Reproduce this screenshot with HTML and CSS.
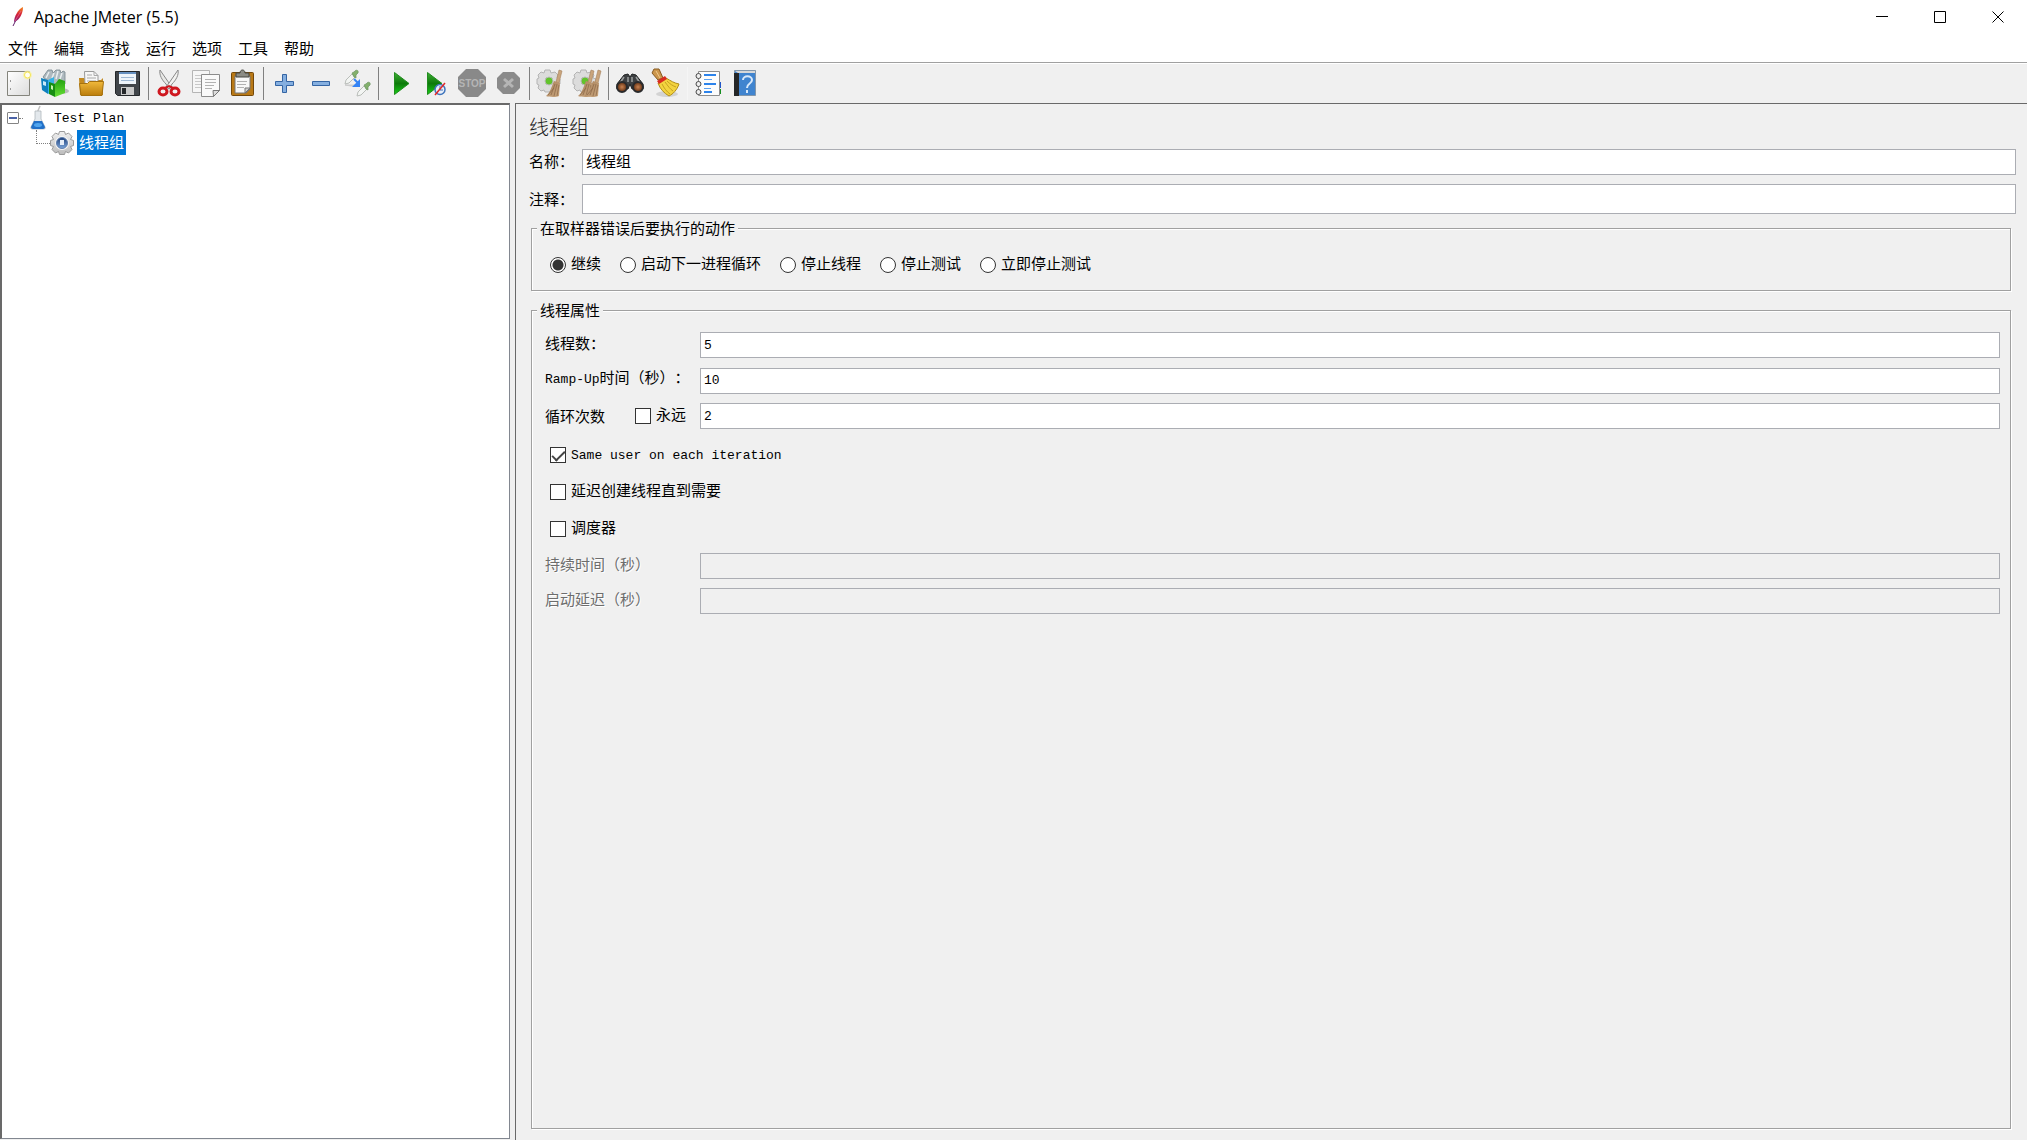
FILE: index.html
```html
<!DOCTYPE html>
<html lang="zh-CN">
<head>
<meta charset="utf-8">
<title>Apache JMeter (5.5)</title>
<link rel="stylesheet" href="styles.css">
</head>
<body>
<svg class="defs" aria-hidden="true">
  <defs>
    <linearGradient id="paper" x1="0" y1="0" x2="1" y2="1"><stop offset="0" stop-color="#fff"/><stop offset="1" stop-color="#dcdcdc"/></linearGradient>
    <linearGradient id="gold" x1="0" y1="0" x2="0" y2="1"><stop offset="0" stop-color="#f0b93c"/><stop offset="1" stop-color="#bb7d0c"/></linearGradient>
    <linearGradient id="play" x1="0" y1="0" x2="0" y2="1"><stop offset="0" stop-color="#3fae35"/><stop offset=".5" stop-color="#0d7a0a"/><stop offset="1" stop-color="#17cf17"/></linearGradient>
    <linearGradient id="green" x1="0" y1="0" x2="0" y2="1"><stop offset="0" stop-color="#22a010"/><stop offset="1" stop-color="#67df35"/></linearGradient>
    <linearGradient id="straw" x1="0" y1="0" x2="1" y2="1"><stop offset="0" stop-color="#a9825c"/><stop offset="1" stop-color="#c9a67e"/></linearGradient>
    <linearGradient id="feather" x1="0" y1="1" x2="0" y2="0"><stop offset="0" stop-color="#7b1f7a"/><stop offset=".5" stop-color="#d4213a"/><stop offset="1" stop-color="#f58a1f"/></linearGradient>
    <linearGradient id="steel" x1="0" y1="0" x2="0" y2="1"><stop offset="0" stop-color="#f0f0f0"/><stop offset="1" stop-color="#bcbcbc"/></linearGradient>
    <linearGradient id="hub" x1="0" y1="0" x2="0" y2="1"><stop offset="0" stop-color="#1d3f78"/><stop offset="1" stop-color="#7ba6dc"/></linearGradient>
    <radialGradient id="lens"><stop offset="0" stop-color="#c98250"/><stop offset="1" stop-color="#5f2f12"/></radialGradient>
    <g id="sweep">
      <path d="M22 0l3 1-3 12-3-1z" fill="#c9a47c" stroke="#a5805a" stroke-width=".6"/>
      <path d="M17 11l6 2-1 13c-3 1.500-10 1-13 0 4-3 5-8 8-15z" fill="url(#straw)"/>
      <path d="M18 14l-4 11M20 14l-3 12M22 15l-2 11M17 18l-6 7" stroke="#8a6646" stroke-width=".7" fill="none"/>
    </g>
    <g id="cog">
      <path d="M8 2h5l1 3 4-1 3 3-1 3 3 1v5l-3 1 1 3-3 3-4-1-1 2H8l-1-2-3 1-3-3 1-3-2-1v-5l2-1-1-3 3-3 3 1z" fill="#dcdcdc" stroke="#b4b4b4"/>
      <circle cx="12" cy="13" r="4" fill="#62c42c" stroke="#b8b8b8"/>
    </g>
    <g id="dropper">
      <path d="M1 14l1-4 6-6 3 3-6 6z" fill="#f3f5f3" stroke="#b9bdb9"/>
      <path d="M8 3l2-1c2-3 5-2 4 1l-2 2 0 3-2-1z" fill="#83b06c" stroke="#6a9560" stroke-width=".7"/>
    </g>
  </defs>
</svg>

<header class="titlebar">
  <svg class="feather" viewBox="0 0 12 20" aria-hidden="true"><path d="M1 19L5 11" stroke="#60206b"/><path d="M2 15C2 10 6 2 11 0c0 6-3 13-9 15z" fill="url(#feather)"/><path d="M3 14L9 4" stroke="#ee6b8a" stroke-width=".7"/></svg>
  <h1 class="app-title">Apache JMeter (5.5)</h1>
  <div class="window-controls">
    <button type="button" aria-label="最小化"><svg viewBox="0 0 12 12"><path d="M0 5.500h12"/></svg></button>
    <button type="button" aria-label="最大化"><svg viewBox="0 0 12 12"><path d="M.5.5h11v11H.5z"/></svg></button>
    <button type="button" aria-label="关闭"><svg viewBox="0 0 12 12"><path d="M.5.5l11 11M11.500.5l-11 11"/></svg></button>
  </div>
</header>

<nav class="menubar">
  <button type="button">文件</button>
  <button type="button">编辑</button>
  <button type="button">查找</button>
  <button type="button">运行</button>
  <button type="button">选项</button>
  <button type="button">工具</button>
  <button type="button">帮助</button>
</nav>

<div class="toolbar" role="toolbar">
  <button type="button" aria-label="新建"><svg viewBox="0 0 28 28"><path d="M2.500 1.500h22v24h-22z" fill="url(#paper)" stroke="#84847c"/><path d="M5.500 10v2M5.500 18v2" stroke="#999"/><circle cx="22.500" cy="5" r="4.500" fill="#f8f2a0" opacity=".7"/><circle cx="22.500" cy="5" r="3" fill="#fffef0" stroke="#f5e34f"/></svg></button>
  <button type="button" aria-label="模板"><svg viewBox="0 0 28 28"><ellipse cx="20" cy="21" rx="8" ry="3" fill="#bbb"/><path d="M2 7l5-7h4l1 3 3-3h4l1 3 2-2 2 1v12H10z" fill="#aeb9bf" stroke="#76858d" stroke-width=".8"/><path d="M8 2l-3 6M13 3l-2 5M17 1l-2 8M21 3l-2 6" stroke="#e9eef0" stroke-width="1.500"/><path d="M0 8l7 2v14l-6-4z" fill="#0d80be"/><path d="M7 10l6-3v14l-6 3z" fill="#36b2e5"/><path d="M2 11l3 1v4l-3-1z" fill="#c8eafa"/><path d="M8 12l6 2v13l-6-3z" fill="#178d12"/><path d="M14 14l4-5 6 2v12l-10 4z" fill="url(#green)"/><path d="M10 15l2 1v4l-2-1z" fill="#caf3ae"/></svg></button>
  <button type="button" aria-label="打开"><svg viewBox="0 0 28 28"><path d="M2 8h5l2 2h15l2-2v17H3z" fill="#c38a20"/><path d="M7.500 1.500H17l4 4V15h-13z" fill="#f7f7f7" stroke="#9a9a9a"/><path d="M17 1.500v4h4M10 5h5M10 8h9M10 11h9" fill="none" stroke="#aaa"/><path d="M2.500 13.500h8l2-2h14l-1.500 14h-21z" fill="url(#gold)" stroke="#a6720f"/></svg></button>
  <button type="button" aria-label="保存"><svg viewBox="0 0 28 28"><path d="M2.500 1.500h24v24h-22l-2-2z" fill="#41454a" stroke="#24272a"/><path d="M6 2h17v12H6z" fill="#eef4fa"/><path d="M6 2h17v2H6z" fill="#6690c0"/><path d="M8 7.500h13M8 10.500h13" stroke="#9fb8d3"/><path d="M8 17h13v8H8z" fill="#c9c9c9"/><path d="M9 18h4v6H9z" fill="#24272a"/></svg></button>
  <span class="sep"></span>
  <button type="button" aria-label="剪切"><svg viewBox="0 0 28 28"><path d="M4 0l9 13 3 4-3 2-3-5C6 10 3 5 4 0z" fill="#e8e8e6" stroke="#888"/><path d="M22 0l-9 13-3 4 3 2 3-5c4-4 7-9 6-14z" fill="#f2f2f0" stroke="#888"/><ellipse cx="7" cy="21.500" rx="4" ry="3.500" fill="#f0f0f0" stroke="#cf1820" stroke-width="3"/><ellipse cx="19" cy="21.500" rx="4" ry="3.500" fill="#f0f0f0" stroke="#cf1820" stroke-width="3"/><path d="M9 18l4-2 4 2" fill="none" stroke="#cf1820" stroke-width="2"/></svg></button>
  <button type="button" aria-label="复制"><svg viewBox="0 0 28 28"><path d="M.5.5h17v22H.5z" fill="#f6f6f6" stroke="#b5b5b5"/><path d="M3 5.500h9M3 8.500h7M3 11.500h7M3 14.500h7M3 17.500h7" stroke="#c8c8c8"/><path d="M9.500 4.500h18v16l-6 6h-12z" fill="#fafafa" stroke="#8c8c8c"/><path d="M13 9.500h11M13 12.500h11M13 15.500h9M13 18.500h7" stroke="#b2b2b2"/><path d="M27.500 20.500l-6 6-.5-6z" fill="#ddd" stroke="#777"/></svg></button>
  <button type="button" aria-label="粘贴"><svg viewBox="0 0 28 28"><rect x="3.500" y="2.500" width="22" height="23" rx="1" fill="#b97916" stroke="#744809"/><path d="M7 6h15v13l-4 4H7z" fill="#f8f8f8" stroke="#777"/><path d="M9 11.500h10M9 14.500h9M9 17.500h7" stroke="#b2b2b2"/><path d="M22 18l-5 5v-5z" fill="#d0d0d0" stroke="#777"/><path d="M8 7V3h4c0-4 5-4 5 0h4v4z" fill="#8b8b84" stroke="#45453f"/></svg></button>
  <span class="sep"></span>
  <button type="button" aria-label="展开"><svg viewBox="0 0 28 28"><path d="M11.500 4.500h4v7h7v4h-7v7h-4v-7h-7v-4h7z" fill="#85afe0" stroke="#3465a4"/></svg></button>
  <button type="button" aria-label="折叠"><svg viewBox="0 0 28 28"><path d="M5.500 11.500h17v4h-17z" fill="#85afe0" stroke="#3465a4"/></svg></button>
  <button type="button" aria-label="切换"><svg viewBox="0 0 28 28"><path d="M2 15h11l-5 1z" fill="#ccc" stroke="#ccc"/><use href="#dropper" x="1"/><use href="#dropper" x="13" y="12"/><path d="M11 9l4 4" stroke="#3584f5" stroke-width="2"/><path d="M17 9v8H9z" fill="#3584f5"/></svg></button>
  <span class="sep"></span>
  <button type="button" aria-label="启动"><svg viewBox="0 0 28 28"><path d="M8.500 2.500L23 13.500 8.500 24.500z" fill="url(#play)" stroke="#218d1e"/></svg></button>
  <button type="button" aria-label="不停顿开始"><svg viewBox="0 0 28 28"><path d="M5.500 2.500L20 13.500 5.500 24.500z" fill="url(#play)" stroke="#218d1e"/><circle cx="18" cy="19.500" r="5" fill="#e8eef8" stroke="#3f75bc" stroke-width="1.500"/><path d="M18 16v4h3" fill="none" stroke="#3f75bc"/><path d="M13 25L23 13" stroke="#e02727" stroke-width="1.500"/></svg></button>
  <button type="button" aria-label="停止" disabled><svg viewBox="0 0 28 28"><path d="M8-1h12l8 8v12l-8 8H8l-8-8V7z" fill="#898989"/><text class="stop-text" x="14" y="17" text-anchor="middle">STOP</text></svg></button>
  <button type="button" aria-label="关闭" disabled><svg viewBox="0 0 28 28"><path d="M9 2h11l6 6v10l-6 6H9l-6-6V8z" fill="#8a8a8a"/><path d="M10 9l9 8M19 9l-9 8" stroke="#b5b5b5" stroke-width="3"/></svg></button>
  <span class="sep"></span>
  <button type="button" aria-label="清除"><svg viewBox="0 0 28 28"><use href="#cog" y="-2"/><use href="#sweep"/></svg></button>
  <button type="button" aria-label="清除全部"><svg viewBox="0 0 28 28"><use href="#cog" y="-2"/><use href="#sweep" x="-4"/><use href="#sweep" x="3"/></svg></button>
  <span class="sep"></span>
  <button type="button" aria-label="查找"><svg viewBox="0 0 28 28"><path d="M8 5l4-1 2 3 2-3 4 1 7 9v5H16l-2-5-2 5H1v-5z" fill="#3d4042" stroke="#202223"/><path d="M8 7l-4 6M20 7l4 6M12 7v5M16 7v5" stroke="#9c9f9f" stroke-width="1.500"/><circle cx="6" cy="17" r="5" fill="url(#lens)" stroke="#292a2c" stroke-width="2"/><circle cx="22" cy="17" r="5" fill="url(#lens)" stroke="#292a2c" stroke-width="2"/></svg></button>
  <button type="button" aria-label="重置查找"><svg viewBox="0 0 28 28"><ellipse cx="15" cy="24" rx="11" ry="3" fill="#d3d3d3"/><path d="M2-1h5l4 9-5 2-6-7z" fill="#cc964b" stroke="#865a22"/><path d="M4 1l4 7" stroke="#f0ca8c"/><path d="M6 13l8-5c5 3 8 5 13 6-2 6-6 10-10 12C12 23 8 19 6 13z" fill="#f3d33f" stroke="#b18e19"/><path d="M10 14c2 4 5 8 8 10M13 12c3 4 5 7 8 9M15 11c3 3 6 5 9 6" fill="none" stroke="#c5a121"/><path d="M5 11l8-5 2 3-8 5z" fill="#d82a1f"/></svg></button>
  <span class="sep faint"></span>
  <button type="button" aria-label="函数助手"><svg viewBox="0 0 28 28"><path d="M23 12h3v6h-3z" fill="#2257c9"/><path d="M23 19h3v5h-3z" fill="#168d20"/><path d="M3.500 1.500h21v24h-21z" fill="#fcfcfc" stroke="#8d8d8d"/><path d="M9 5h12M9 14h12M9 22h8" stroke="#2c83eb" stroke-width="2"/><path d="M9 9.500h8M9 18.500h7" stroke="#5ca1ef"/><g fill="#eee" stroke="#4a4a4a"><circle cx="3.500" cy="6" r="2.500"/><circle cx="3.500" cy="14" r="2.500"/><circle cx="3.500" cy="22" r="2.500"/></g></svg></button>
  <button type="button" aria-label="帮助"><svg viewBox="0 0 28 28"><path d="M3.500.5h21v25h-21z" fill="#4084cf" stroke="#8397ab"/><path d="M3 3h5v23H3z" fill="#242628"/><path d="M4 1h20v2H7z" fill="#d8d8d8"/><path d="M12 10c0-5 9-5 9 0 0 4-5 3-5 8M16 20v3" fill="none" stroke="#d9e9fa" stroke-width="2"/></svg></button>
</div>

<main class="workspace">
  <aside class="tree">
    <div class="tree-row">
      <button type="button" class="expander" aria-label="折叠 Test Plan"></button><span class="stub"></span>
      <svg class="flask" viewBox="0 0 16 24" aria-hidden="true"><path d="M7 7l3-7" stroke="#c2c2c2" stroke-width="1.500"/><path d="M5 5h6v8l4 8c1 2-1 2-2 2H3c-1 0-3 0-2-2l4-8z" fill="#e3e8ec" stroke="#b0b7bd" stroke-width=".8"/><path d="M4 15h8l3 6c0 1-1 2-2 2H3c-1 0-2-1-2-2z" fill="#2270c8"/><ellipse cx="8" cy="19" rx="4" ry="2" fill="#50a5ee"/></svg>
      <span class="tree-label latin">Test Plan</span>
    </div>
    <div class="tree-row child">
      <span class="branch"></span>
      <svg class="gear" viewBox="0 0 24 24" aria-hidden="true"><path d="M9.500.5h5l1 3 3-1.500L22 5.500l-1.500 3 3 1v5l-3 1 1.500 3-3.500 3.500-3-1.500-1 3h-5l-1-3-3 1.500L2 18.500l1.500-3-3-1v-5l3-1L2 5.500 5.500 2l3 1.500z" fill="url(#steel)" stroke="#9a9a9a"/><circle cx="12" cy="12" r="7" fill="#f4f4f4"/><circle cx="12" cy="12" r="5.500" fill="url(#hub)" stroke="#5f7fae"/><path d="M10 9h4v5h-4z" fill="#e4edf8"/></svg>
      <span class="tree-label selected">线程组</span>
    </div>
  </aside>

  <form class="panel">
    <h2 class="panel-title">线程组</h2>
    <div class="field">
      <label for="name">名称：</label>
      <input id="name" type="text" value="线程组">
    </div>
    <div class="field tall">
      <label for="comment">注释：</label>
      <input id="comment" type="text">
    </div>

    <fieldset class="group on-error">
      <legend>在取样器错误后要执行的动作</legend>
      <div class="radios">
        <label class="option"><input type="radio" name="onerror" checked><span>继续</span></label>
        <label class="option"><input type="radio" name="onerror"><span>启动下一进程循环</span></label>
        <label class="option"><input type="radio" name="onerror"><span>停止线程</span></label>
        <label class="option"><input type="radio" name="onerror"><span>停止测试</span></label>
        <label class="option"><input type="radio" name="onerror"><span>立即停止测试</span></label>
      </div>
    </fieldset>

    <fieldset class="group props">
      <legend>线程属性</legend>
      <div class="rows">
        <label for="threads">线程数：</label>
        <input id="threads" class="latin" type="text" value="5">
        <label for="ramp"><span class="latin">Ramp-Up</span>时间（秒）：</label>
        <input id="ramp" class="latin" type="text" value="10">
        <div class="loop">
          <label for="loops">循环次数</label>
          <label class="option"><input type="checkbox"><span>永远</span></label>
        </div>
        <input id="loops" class="latin" type="text" value="2">
      </div>
      <div class="checks">
        <label class="option"><input type="checkbox" checked><span class="latin">Same user on each iteration</span></label>
        <label class="option"><input type="checkbox"><span>延迟创建线程直到需要</span></label>
        <label class="option"><input type="checkbox"><span>调度器</span></label>
      </div>
      <div class="rows disabled">
        <label for="duration">持续时间（秒）</label>
        <input id="duration" type="text" disabled>
        <label for="delay">启动延迟（秒）</label>
        <input id="delay" type="text" disabled>
      </div>
    </fieldset>
  </form>
</main>
</body>
</html>
```
FILE: styles.css
```css
* {
  box-sizing: border-box;
}

body {
  margin: 0;
  min-height: 100vh;
  display: flex;
  flex-direction: column;
  background: #f0f0f0;
  color: #000;
  font: 15px/20px "Noto Sans CJK SC", sans-serif;
  text-spacing-trim: space-all;
}

button {
  margin: 0;
  padding: 0;
  border: 0;
  background: none;
  color: inherit;
  font: inherit;
}

svg {
  display: block;
  overflow: visible;
}

.defs {
  position: absolute;
  width: 0;
  height: 0;
}

.latin {
  font-family: "Liberation Mono", monospace;
  font-size: 13px;
}

/* Title bar */
.titlebar {
  display: flex;
  align-items: center;
  height: 34px;
  padding-left: 12px;
  background: #fff;
}

.feather {
  width: 12px;
  height: 20px;
}

.app-title {
  flex: 1;
  margin: 0;
  padding-left: 10px;
  font: 400 16px/20px "Open Sans", sans-serif;
}

.window-controls {
  display: flex;
}

.window-controls button {
  width: 58px;
  height: 34px;
  display: grid;
  place-items: center;
}

.window-controls svg {
  width: 12px;
  height: 12px;
  fill: none;
  stroke: #000;
}

/* Menu */
.menubar {
  display: flex;
  gap: 16px;
  height: 29px;
  padding: 4px 8px;
  background: #fff;
  border-bottom: 1px solid #a0a0a0;
}

.menubar button {
  height: 20px;
}

/* Toolbar */
.toolbar {
  display: flex;
  align-items: center;
  height: 40px;
  padding-left: 1px;
  border-top: 1px solid #fff;
}

.toolbar button {
  width: 36px;
  height: 36px;
  display: grid;
  place-items: center;
}

.toolbar svg {
  width: 28px;
  height: 28px;
}

.sep {
  width: 1px;
  height: 33px;
  margin: 0 3px;
  background: #808080;
}

.sep.faint {
  background: #f5f5f5;
}

.stop-text {
  font: 700 10px "Liberation Sans", sans-serif;
  fill: #b5b5b5;
}

/* Workspace */
.workspace {
  flex: 1;
  display: flex;
  gap: 5px;
}

.tree {
  width: 510px;
  margin-bottom: 1px;
  padding: 1px 0 0 5px;
  background: #fff;
  border: 1px solid #828790;
  border-top: 2px solid #696969;
  border-left: 2px solid #696969;
}

.tree-row {
  display: flex;
  align-items: center;
  height: 24px;
}

.expander {
  width: 12px;
  height: 12px;
  border: 1px solid #848484;
  border-radius: 1px;
  background: linear-gradient(#4b63a7, #4b63a7) center / 8px 2px no-repeat #fff;
}

.stub {
  width: 4px;
  margin-right: 7px;
  border-top: 1px dotted #808080;
}

.flask {
  width: 16px;
  height: 24px;
}

.tree-row .latin {
  padding: 2px 0 0 8px;
}

.child {
  height: 25px;
  padding-left: 29px;
}

.branch {
  align-self: flex-start;
  width: 14px;
  height: 14px;
  border-left: 1px dotted #808080;
  border-bottom: 1px dotted #808080;
}

.gear {
  width: 24px;
  height: 24px;
}

.selected {
  height: 25px;
  margin-left: 3px;
  padding: 2px;
  background: #0078d7;
  color: #fff;
}

/* Editor panel */
.panel {
  flex: 1;
  display: flex;
  flex-direction: column;
  padding: 11px 11px 11px 13px;
  border-top: 1px solid #696969;
  border-left: 1px solid #696969;
}

.panel-title {
  margin: 0 0 10px;
  font-size: 20px;
  line-height: 24px;
  font-weight: 300;
  color: #222;
}

input[type="text"] {
  width: 100%;
  height: 26px;
  margin: 0;
  padding: 0 3px;
  border: 1px solid #abadb3;
  border-radius: 0;
  background: #fff;
  color: #000;
  outline: 0;
}

input[type="text"]:disabled {
  background: #f0f0f0;
}

#name,
#comment {
  padding-bottom: 3px;
  font-family: inherit;
  font-size: 15px;
}

.field {
  display: grid;
  grid-template-columns: 53px 1fr;
  align-items: center;
  margin-bottom: 9px;
}

.field label {
  padding-bottom: 2px;
}

.field.tall {
  margin-bottom: 4px;
}

.field.tall label {
  padding-bottom: 0;
}

.field.tall input {
  height: 30px;
}

.group {
  min-width: 0;
  margin: 0 5px 0 2px;
  border: 1px solid #a0a0a0;
  box-shadow: 1px 1px 0 #fff, inset 1px 1px 0 #fff;
}

.group legend {
  padding: 0 3px;
  line-height: 20px;
  background: #f0f0f0;
}

.on-error {
  margin-bottom: 9px;
  padding: 15px 18px 13px;
}

.props {
  flex: 1;
  padding: 12px 10px 12px 13px;
}

.props legend {
  margin-left: -8px;
}

.on-error legend {
  margin-left: -13px;
}

.radios {
  display: flex;
  gap: 19px;
}

.option {
  display: flex;
  align-items: center;
  gap: 5px;
}

.option span {
  padding-bottom: 4px;
}

.option .latin {
  padding: 2px 0 0;
}

.option input {
  appearance: none;
  flex: none;
  width: 16px;
  height: 16px;
  margin: 0;
  border: 1px solid #333;
  background: #fff;
}

.option input[type="radio"] {
  border-radius: 50%;
}

.option input[type="radio"]:checked {
  background: radial-gradient(circle, #333 0 5px, #fff 6px);
}

.option input[type="checkbox"]:checked {
  display: grid;
  place-items: center;
}

.option input[type="checkbox"]:checked::before {
  content: "";
  width: 11px;
  height: 5px;
  border: solid #444;
  border-width: 0 0 2px 2px;
  transform: translateY(-1px) rotate(-45deg);
}

.rows {
  display: grid;
  grid-template-columns: 155px 1fr;
  row-gap: 9px;
  align-items: center;
}

.rows > label {
  padding-bottom: 4px;
}

.loop {
  display: flex;
  align-items: center;
  gap: 30px;
}

.checks {
  display: flex;
  flex-direction: column;
  align-items: flex-start;
  gap: 11px;
  margin: 13px 0 11px;
  padding-left: 5px;
}

.checks .option {
  height: 26px;
}

.disabled {
  color: #6d6d6d;
  text-shadow: 1px 1px 0 #fff;
}
```
